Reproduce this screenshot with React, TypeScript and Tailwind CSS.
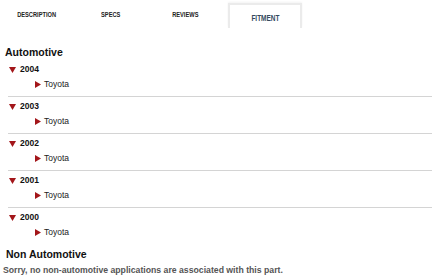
const years = ['2004', '2003', '2002', '2001', '2000']

function Down() {
  return (
    <svg width="7" height="6" viewBox="0 0 7 6" className="shrink-0">
      <polygon points="0,0 7,0 3.5,6" fill="#a3161a" />
    </svg>
  )
}

function Right() {
  return (
    <svg width="6" height="7" viewBox="0 0 6 7" className="shrink-0">
      <polygon points="0,0 6,3.5 0,7" fill="#a3161a" />
    </svg>
  )
}

function Tab({ label, active }: { label: string; active?: boolean }) {
  if (active) {
    return (
      <div className="ml-[6px] mt-[3px] flex h-[25px] w-[74px] items-center justify-center border-x-2 border-t-2 border-[#ebebeb] pt-[4px] shadow-[0_-1px_2px_rgba(0,0,0,0.05)]">
        <span className="inline-block scale-x-[0.76] text-[8.5px] font-bold text-[#34495e]">{label}</span>
      </div>
    )
  }
  return (
    <div className="flex h-[30px] w-[74px] items-center justify-center">
      <span className="inline-block scale-x-[0.76] text-[7.5px] font-bold text-[#222]">{label}</span>
    </div>
  )
}

export default function App() {
  return (
    <div className="h-[278px] w-[435px] overflow-hidden bg-white font-['Liberation_Sans',Arial,sans-serif] text-[#111]">
      <div className="flex h-[30px] items-start">
        <Tab label="DESCRIPTION" />
        <Tab label="SPECS" />
        <Tab label="REVIEWS" />
        <Tab label="FITMENT" active />
      </div>

      <div className="mt-[16px] flex h-[14px] items-center pl-[5px] text-[10.5px] font-bold">Automotive</div>

      <div className="ml-[8px] mr-[3px]">
        {years.map((y, i) => (
          <div key={y} className={i < years.length - 1 ? 'border-b border-[#d4d4d4] pb-[4px] pt-[2px]' : 'pb-[4px] pt-[2px]'}>
            <div className="flex h-[15px] items-center gap-[4px] pl-[1px]">
              <Down />
              <span className="text-[8.5px] font-bold">{y}</span>
            </div>
            <div className="flex h-[15px] items-center gap-[3px] pl-[27px]">
              <Right />
              <span className="text-[8.5px] text-[#222]">Toyota</span>
            </div>
          </div>
        ))}
      </div>

      <div className="mt-[4px] flex h-[14px] items-center pl-[6px] text-[10.5px] font-bold">Non Automotive</div>
      <div className="mt-[3px] flex h-[12px] items-center pl-[3px] text-[8.7px] font-bold text-[#555]">
        Sorry, no non-automotive applications are associated with this part.
      </div>
    </div>
  )
}
